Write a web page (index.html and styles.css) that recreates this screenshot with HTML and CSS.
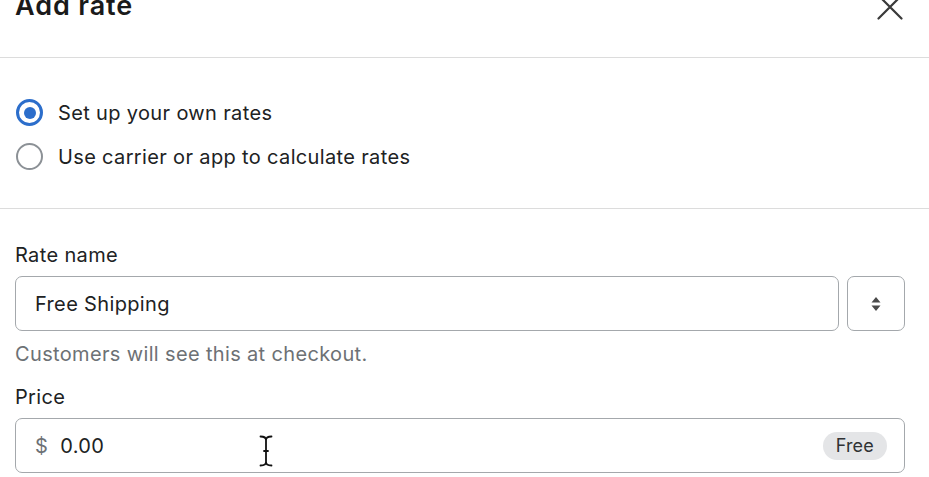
FILE: index.html
```html
<!DOCTYPE html>
<html lang="en">
<head>
  <meta charset="UTF-8" />
  <title>Add rate</title>
  <link rel="stylesheet" href="styles.css">
</head>
<body>

<div class="modal">
  <header class="modal-header">
    <h1>Add rate</h1>
    <button class="close-btn" aria-label="Close">
      <svg width="26" height="26" viewBox="0 0 26 26">
        <path d="M1.5 1.5 L24.5 24.5 M24.5 1.5 L1.5 24.5" stroke="#3a3a3a" stroke-width="2.2" stroke-linecap="round" fill="none"/>
      </svg>
    </button>
  </header>

  <section class="choices">
    <label class="choice">
      <span class="radio checked"></span>
      Set up your own rates
    </label>
    <label class="choice">
      <span class="radio"></span>
      Use carrier or app to calculate rates
    </label>
  </section>

  <section class="form">
    <div class="field-label">Rate name</div>
    <div class="name-row">
      <div class="text-input">Free Shipping</div>
      <button class="picker">
        <svg width="12" height="18" viewBox="0 0 12 18">
          <path d="M6 2 L10.5 7.5 H1.5 Z M6 16 L10.5 10.5 H1.5 Z" fill="#4a4a4a"/>
        </svg>
      </button>
    </div>
    <div class="help">Customers will see this at checkout.</div>

    <div class="field-label price-label">Price</div>
    <div class="text-input price-input">
      <span class="prefix">$</span>
      <span class="value">0.00</span>
      <span class="badge">Free</span>
      <!-- mouse cursor -->
      <svg class="ibeam" width="14" height="32" viewBox="0 0 14 32">
        <path d="M1.5 1.5 Q7 1.5 7 5 Q7 1.5 12.5 1.5 M7 5 V27 M1.5 30.5 Q7 30.5 7 27 Q7 30.5 12.5 30.5 M5 16 H9" stroke="#111" stroke-width="1.8" fill="none" stroke-linecap="round"/>
      </svg>
    </div>
  </section>
</div>

</body>
</html>
```

FILE: styles.css
```css
body {
  font-family: Inter, 'Liberation Sans', sans-serif;
  background: #fff;
  color: #202223;
  margin: 0;
  padding: 0;
  overflow: hidden;
  letter-spacing: 0.35px;
}

.modal {
  width: 929px;
}

.modal-header {
  display: flex;
  justify-content: space-between;
  align-items: flex-start;
  margin-top: -10px;
  height: 67px;
  padding: 0 26px 0 15px;
  border-bottom: 1.5px solid #dcdcdc;
}

.modal-header h1 {
  margin: 0;
  font-size: 27px;
  line-height: 32px;
  font-weight: 600;
  letter-spacing: 0.9px;
  color: #1a1a1a;
}

.close-btn {
  margin-top: 4px;
  padding: 0;
  border: none;
  background: none;
  line-height: 0;
}

.choices {
  display: flex;
  flex-direction: column;
  gap: 17px;
  padding: 41px 15px 38px 16px;
  border-bottom: 1.5px solid #dcdcdc;
}

.choice {
  display: flex;
  align-items: center;
  gap: 15px;
  font-size: 20px;
  line-height: 26px;
  color: #202223;
}

.radio {
  box-sizing: border-box;
  width: 27px;
  height: 27px;
  border-radius: 50%;
  border: 2.5px solid #8c9196;
  background: #fff;
  display: flex;
  align-items: center;
  justify-content: center;
}

.radio.checked {
  border: 3px solid #2c6ecb;
}

.radio.checked::after {
  content: '';
  width: 12px;
  height: 12px;
  border-radius: 50%;
  background: #2c6ecb;
}

.form {
  padding: 32px 24px 0 15px;
}

.field-label {
  font-size: 20px;
  line-height: 28px;
  color: #202223;
  margin-bottom: 7px;
}

.price-label {
  margin-top: 15px;
}

.name-row {
  display: flex;
  gap: 8px;
}

.text-input {
  box-sizing: border-box;
  flex: 1;
  height: 55px;
  display: flex;
  align-items: center;
  padding: 0 19px;
  border: 1.5px solid #a4a8ac;
  border-radius: 7px;
  font-size: 20px;
  color: #202223;
  background: #fff;
}

.picker {
  box-sizing: border-box;
  width: 58px;
  height: 55px;
  border: 1.5px solid #a4a8ac;
  border-radius: 7px;
  background: #fff;
  display: flex;
  align-items: center;
  justify-content: center;
  padding: 0;
}

.help {
  margin-top: 9px;
  font-size: 20px;
  line-height: 28px;
  color: #6d7175;
}

.price-input {
  position: relative;
  gap: 12px;
}

.prefix {
  color: #6d7175;
}

.badge {
  margin-left: auto;
  margin-right: -2px;
  background: #e4e5e7;
  border-radius: 14px;
  padding: 0 13px;
  height: 28px;
  line-height: 28px;
  font-size: 18px;
  letter-spacing: 0.2px;
  color: #303234;
}

.ibeam {
  position: absolute;
  left: 243px;
  top: 16px;
}
```
